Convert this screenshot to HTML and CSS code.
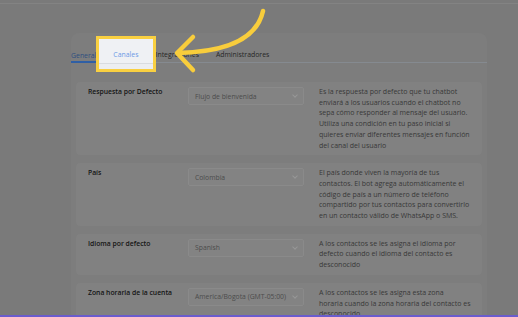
FILE: index.html
```html
<!DOCTYPE html>
<html lang="es">
<head>
<meta charset="utf-8">
<title>Configuración</title>
<link rel="stylesheet" href="styles.css">
</head>
<body>
<div class="topline"></div>
<main class="panel">
  <nav class="tabs">
    <span class="tab active">General</span>
    <span class="tab lit">Canales</span>
    <span class="tab">Integraciones</span>
    <span class="tab">Administradores</span>
  </nav>
  <section class="list">
    <div class="row">
      <div class="label">Respuesta por Defecto</div>
      <div class="select"><span>Flujo de bienvenida</span><span class="chev"></span></div>
      <p class="desc">Es la respuesta por defecto que tu chatbot<br>enviará a los usuarios cuando el chatbot no<br>sepa cómo responder al mensaje del usuario.<br>Utiliza una condición en tu paso inicial si<br>quieres enviar diferentes mensajes en función<br>del canal del usuario</p>
    </div>
    <div class="row">
      <div class="label">País</div>
      <div class="select"><span>Colombia</span><span class="chev"></span></div>
      <p class="desc">El país donde viven la mayoría de tus<br>contactos. El bot agrega automáticamente el<br>código de país a un número de teléfono<br>compartido por tus contactos para convertirlo<br>en un contacto válido de WhatsApp o SMS.</p>
    </div>
    <div class="row">
      <div class="label">Idioma por defecto</div>
      <div class="select"><span>Spanish</span><span class="chev"></span></div>
      <p class="desc">A los contactos se les asigna el idioma por<br>defecto cuando el idioma del contacto es<br>desconocido</p>
    </div>
    <div class="row">
      <div class="label">Zona horaria de la cuenta</div>
      <div class="select"><span>America/Bogota (GMT-05:00)</span><span class="chev"></span></div>
      <p class="desc">A los contactos se les asigna esta zona<br>horaria cuando la zona horaria del contacto es<br>desconocido</p>
    </div>
  </section>
</main>
<div class="spot"></div>
<svg class="arrow" width="518" height="90" viewBox="0 0 518 90">
  <path d="M263 11 C 257 38, 230 52, 178 53" fill="none" stroke="#f8cd3c" stroke-width="4.5" stroke-linecap="round"/>
  <path d="M193 37 L177 53 L193 70" fill="none" stroke="#f8cd3c" stroke-width="4.5" stroke-linecap="round" stroke-linejoin="round"/>
</svg>
<div class="bottombar"></div>
</body>
</html>
```

FILE: styles.css
```css
html, body {
  margin: 0;
  padding: 0;
  height: 317px;
  overflow: hidden;
}
body {
  background: #7a7a7a;
  font-family: "Open Sans", "Noto Sans", sans-serif;
  position: relative;
}
.topline {
  height: 1px;
  margin-top: 3px;
  background: #838383;
}
.panel {
  margin: 29px 0 0 71px;
  width: 416px;
  background: #7d7d7d;
  border-radius: 8px 8px 0 0;
}
.tabs {
  display: flex;
  gap: 17px;
  height: 29px;
  align-items: flex-end;
  border-bottom: 1px solid #858a90;
}
.tab {
  font-size: 6.9px;
  line-height: 10px;
  padding-bottom: 2px;
  color: #262626;
}
.tab.active {
  color: #2e4f80;
  border-bottom: 2px solid #2f5fa5;
  padding-bottom: 0;
  margin-bottom: -1px;
}
.tab.lit {
  position: relative;
  z-index: 3;
  color: #6c9ae6;
}
.list {
  display: flex;
  flex-direction: column;
  gap: 8px;
  padding: 19px 5px 0 5px;
}
.row {
  display: grid;
  grid-template-columns: 85px 116px 1fr;
  column-gap: 15px;
  align-items: start;
  background: #818181;
  border-radius: 4px;
  padding: 5px 7px 4px 12px;
}
.label {
  font-size: 6.8px;
  font-weight: 600;
  line-height: 10.7px;
  color: #141414;
  white-space: nowrap;
}
.select {
  height: 16px;
  border: 1px solid #8a8a8a;
  background: #838383;
  border-radius: 2px;
  display: flex;
  align-items: center;
  justify-content: space-between;
  padding: 0 6px 0 6px;
  font-size: 6.8px;
  color: #4c4c4c;
}
.chev {
  width: 3px;
  height: 3px;
  border-right: 1px solid #979797;
  border-bottom: 1px solid #979797;
  transform: rotate(45deg);
  margin-top: -2px;
}
.desc {
  margin: 0;
  font-size: 7px;
  line-height: 10.7px;
  color: #383838;
  white-space: nowrap;
}
.spot {
  position: absolute;
  z-index: 2;
  left: 96px;
  top: 36px;
  width: 54px;
  height: 30px;
  border: 3px solid #f9d041;
  background: linear-gradient(#eff1f4 0 24px, #d9dce0 24px 25px, #eceef1 25px);
}
.arrow {
  position: absolute;
  z-index: 4;
  left: 0;
  top: 0;
}
.bottombar {
  position: fixed;
  left: 0;
  right: 0;
  bottom: 0;
  height: 2px;
  background: #6a5ccd;
}
```
